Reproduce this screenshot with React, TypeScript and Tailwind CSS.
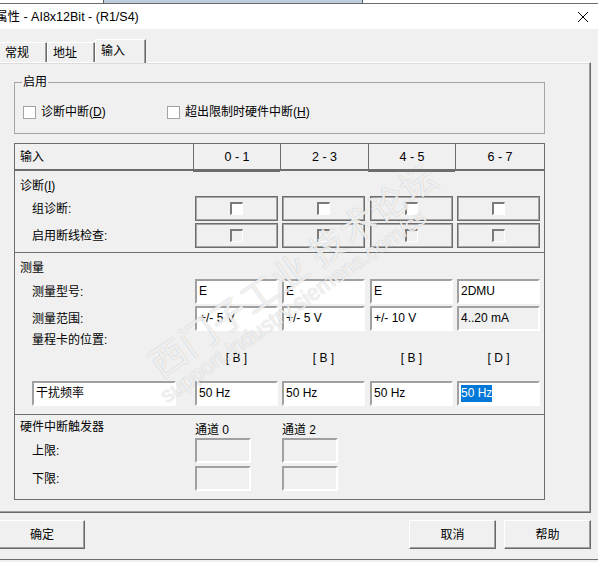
import React from 'react';

const COLS = 'grid grid-cols-[180px_87px_88px_87px_83px]';

function Sunken({
  w,
  white = true,
  children,
}: {
  w: string;
  white?: boolean;
  children?: React.ReactNode;
}) {
  return (
    <div
      className={`${w} h-[25px] border-2 border-t-[#a0a0a0] border-l-[#a0a0a0] border-b-white border-r-white ${
        white ? 'bg-white' : 'bg-[#f0f0f0]'
      } flex items-center pl-[2px] text-[12px] leading-[17px] text-black whitespace-nowrap`}
    >
      {children}
    </div>
  );
}

function CheckCell({ enabled }: { enabled: boolean }) {
  return (
    <div className="w-[83px] h-[25px] border border-[#6d6d6d] shadow-[inset_0_0_0_1px_#a6a6a6] flex items-center justify-center">
      <div
        className={`w-[13px] h-[13px] border-t-2 border-l-2 border-t-[#7a7a7a] border-l-[#7a7a7a] border-b border-r border-b-white border-r-white ${
          enabled ? 'bg-white' : 'bg-[#f0f0f0]'
        }`}
      />
    </div>
  );
}

function Button({ w, children }: { w: string; children: React.ReactNode }) {
  return (
    <div
      className={`${w} h-[29px] border-t border-l border-white border-b border-r border-b-[#696969] border-r-[#696969] shadow-[inset_-1px_-1px_0_#a0a0a0] bg-[#f0f0f0] flex items-center justify-center text-[12px] text-black`}
    >
      {children}
    </div>
  );
}

export default function App() {
  return (
    <div className="relative w-[598px] h-[562px] overflow-hidden bg-[#f0f0f0] flex flex-col font-['Liberation_Sans','Noto_Sans_CJK_SC',sans-serif] text-[12px] text-black">
      {/* background window fragment */}
      <div className="h-[4px] bg-white border-b border-[#6b6b6b] flex shrink-0">
        <div className="w-[103px]" />
        <div className="relative w-[260px] h-full bg-[#bfcedd] border-l border-r border-[#5e5e5e] overflow-hidden">
          <div className="absolute left-[5px] top-[-11px] text-[12px] leading-[14px] text-[#222] whitespace-nowrap">
            OHI 9IIIIIIVIII
          </div>
        </div>
      </div>

      {/* title bar */}
      <div className="h-[25px] bg-white flex items-center justify-between shrink-0">
        <div className="-ml-[5px] text-[12.5px] leading-[16px] whitespace-nowrap">
          属性 - AI8x12Bit - (R1/S4)
        </div>
        <svg width="12" height="12" viewBox="0 0 12 12" className="mr-[9px] mt-[1px]">
          <path d="M1 1 L11 11 M11 1 L1 11" stroke="#000" strokeWidth="1" fill="none" />
        </svg>
      </div>

      {/* tabs */}
      <div className="h-[33px] flex items-end shrink-0">
        <div className="w-[47px] h-[20px] border-t border-white border-r border-r-[#696969] shadow-[inset_-1px_0_0_#a0a0a0] flex items-center pl-[5px] leading-[16px]">
          常规
        </div>
        <div className="w-[48px] h-[20px] border-t border-l border-white border-r border-r-[#696969] shadow-[inset_-1px_0_0_#a0a0a0] flex items-center pl-[5px] leading-[16px]">
          地址
        </div>
        <div className="relative z-10 -mb-px w-[51px] h-[24px] bg-[#f0f0f0] border-t border-l border-white border-r border-r-[#696969] shadow-[inset_-1px_0_0_#a0a0a0] flex items-center pl-[5px] pb-[1px] leading-[16px]">
          输入
        </div>
      </div>

      {/* tab page */}
      <div className="w-[591px] h-[451px] shrink-0 border-t border-t-white border-r border-b border-r-[#696969] border-b-[#696969] shadow-[inset_-1px_-1px_0_#a0a0a0,inset_0_1px_0_#dcdcdc] pl-[14px] pt-[19px] flex flex-col">
        {/* group 启用 */}
        <div className="relative w-[531px] h-[52px] border border-[#a5a5a5] shrink-0">
          <div className="absolute left-[7px] top-[-9px] px-[1px] bg-[#f0f0f0] leading-[16px]">启用</div>
          <div className="pt-[21px] pl-[8px] flex items-center h-[37px]">
            <div className="w-[144px] flex items-center">
              <div className="w-[13px] h-[13px] border border-[#a3a3a3] bg-white" />
              <span className="ml-[5px] leading-[16px]">
                诊断中断(<u>D</u>)
              </span>
            </div>
            <div className="flex items-center">
              <div className="w-[13px] h-[13px] border border-[#a3a3a3] bg-white" />
              <span className="ml-[5px] leading-[16px]">
                超出限制时硬件中断(<u>H</u>)
              </span>
            </div>
          </div>
        </div>

        {/* table */}
        <div className="mt-[9px] w-[531px] h-[357px] border border-[#6d6d6d] flex flex-col shrink-0">
          {/* header */}
          <div className="flex h-[27px] items-start shrink-0">
            <div className="w-[178px] h-[27px] border-b-2 border-[#6d6d6d] flex items-center pl-[5px] leading-[16px]">
              输入
            </div>
            <div className="relative z-10 w-[87px] h-[28px] -mb-px border-l border-b-[3px] border-[#6d6d6d] flex items-center justify-center leading-[16px] text-[12.5px]">
              0 - 1
            </div>
            <div className="w-[88px] h-[27px] border-l border-b-2 border-[#6d6d6d] flex items-center justify-center leading-[16px] text-[12.5px]">
              2 - 3
            </div>
            <div className="relative z-10 w-[87px] h-[28px] -mb-px border-l border-b-[3px] border-[#6d6d6d] flex items-center justify-center leading-[16px] text-[12.5px]">
              4 - 5
            </div>
            <div className="flex-1 h-[27px] border-l border-b-2 border-[#6d6d6d] flex items-center justify-center leading-[16px] text-[12.5px]">
              6 - 7
            </div>
          </div>

          {/* diagnostics */}
          <div className="h-[81px] pt-[7px] flex flex-col shrink-0">
            <div className="h-[16px] leading-[16px] pl-[5px]">
              诊断(<u>I</u>)
            </div>
            <div className="mt-[2px] flex flex-col gap-[2px]">
              <div className={`${COLS} h-[25px] items-center`}>
                <div className="pl-[17px] leading-[16px]">组诊断:</div>
                <CheckCell enabled />
                <CheckCell enabled />
                <CheckCell enabled />
                <CheckCell enabled />
              </div>
              <div className={`${COLS} h-[25px] items-center`}>
                <div className="pl-[17px] leading-[16px]">启用断线检查:</div>
                <CheckCell enabled={false} />
                <CheckCell enabled={false} />
                <CheckCell enabled={false} />
                <CheckCell enabled={false} />
              </div>
            </div>
          </div>
          <div className="h-px bg-[#6d6d6d] shrink-0" />

          {/* measurement */}
          <div className="h-[161px] pt-[7px] flex flex-col shrink-0">
            <div className="h-[16px] leading-[16px] pl-[5px]">测量</div>
            <div className={`${COLS} mt-[3px] h-[25px] items-center`}>
              <div className="pl-[17px] leading-[16px]">测量型号:</div>
              <Sunken w="w-[83px]">E</Sunken>
              <Sunken w="w-[83px]">E</Sunken>
              <Sunken w="w-[83px]">E</Sunken>
              <Sunken w="w-[83px]">2DMU</Sunken>
            </div>
            <div className={`${COLS} mt-[2px] h-[25px] items-center`}>
              <div className="pl-[17px] leading-[16px]">测量范围:</div>
              <Sunken w="w-[83px]">+/- 5 V</Sunken>
              <Sunken w="w-[83px]">+/- 5 V</Sunken>
              <Sunken w="w-[83px]">+/- 10 V</Sunken>
              <Sunken w="w-[83px]" white={false}>
                4..20 mA
              </Sunken>
            </div>
            <div className="mt-[1px] h-[16px] leading-[16px] pl-[17px]">量程卡的位置:</div>
            <div className={`${COLS} mt-[2px] h-[16px] leading-[16px]`}>
              <div />
              <div className="w-[83px] text-center">[ B ]</div>
              <div className="w-[83px] text-center">[ B ]</div>
              <div className="w-[83px] text-center">[ B ]</div>
              <div className="w-[83px] text-center">[ D ]</div>
            </div>
            <div className={`${COLS} mt-[15px] h-[25px] items-center`}>
              <div className="pl-[17px]">
                <Sunken w="w-[144px]">干扰频率</Sunken>
              </div>
              <Sunken w="w-[83px]">50 Hz</Sunken>
              <Sunken w="w-[83px]">50 Hz</Sunken>
              <Sunken w="w-[83px]">50 Hz</Sunken>
              <Sunken w="w-[83px]">
                <span className="bg-[#0078d7] text-white leading-[17px]">50 Hz</span>
              </Sunken>
            </div>
          </div>
          <div className="h-px bg-[#6d6d6d] shrink-0" />

          {/* hardware interrupt */}
          <div className="flex-1 flex flex-col">
            <div className={`${COLS} h-[23px]`}>
              <div className="pl-[5px] pt-[4px] leading-[16px]">硬件中断触发器</div>
              <div className="self-end leading-[16px]">通道 0</div>
              <div className="self-end leading-[16px]">通道 2</div>
            </div>
            <div className={`${COLS} h-[25px] items-center`}>
              <div className="pl-[17px] leading-[16px]">上限:</div>
              <Sunken w="w-[56px]" white={false} />
              <Sunken w="w-[56px]" white={false} />
            </div>
            <div className={`${COLS} mt-[3px] h-[25px] items-center`}>
              <div className="pl-[17px] leading-[16px]">下限:</div>
              <Sunken w="w-[56px]" white={false} />
              <Sunken w="w-[56px]" white={false} />
            </div>
          </div>
        </div>
      </div>

      {/* buttons */}
      <div className="mt-[7px] h-[29px] flex shrink-0">
        <div className="-ml-px">
          <Button w="w-[86px]">确定</Button>
        </div>
        <div className="ml-[324px]">
          <Button w="w-[87px]">取消</Button>
        </div>
        <div className="ml-[8px]">
          <Button w="w-[87px]">帮助</Button>
        </div>
      </div>
      <div className="mt-[10px] flex-1 border-t border-[#6d6d6d] bg-[#f0f0f0]" />

      {/* watermark */}
      <div className="pointer-events-none absolute left-[152px] top-[348px] origin-left rotate-[-35deg] whitespace-nowrap text-[36px] leading-[36px] tracking-[1px] text-white/80 font-['Noto_Sans_CJK_SC',sans-serif] [text-shadow:0_0_1px_rgba(90,90,90,0.45)]">
        西门子工业 技术论坛
      </div>
      <div className="pointer-events-none absolute left-[163px] top-[387px] origin-left rotate-[-35deg] whitespace-nowrap text-[22px] leading-[22px] text-white/80 font-['Liberation_Sans',sans-serif] [text-shadow:0_0_1px_rgba(90,90,90,0.45)]">
        support.industry.siemens.com/cs
      </div>
    </div>
  );
}
